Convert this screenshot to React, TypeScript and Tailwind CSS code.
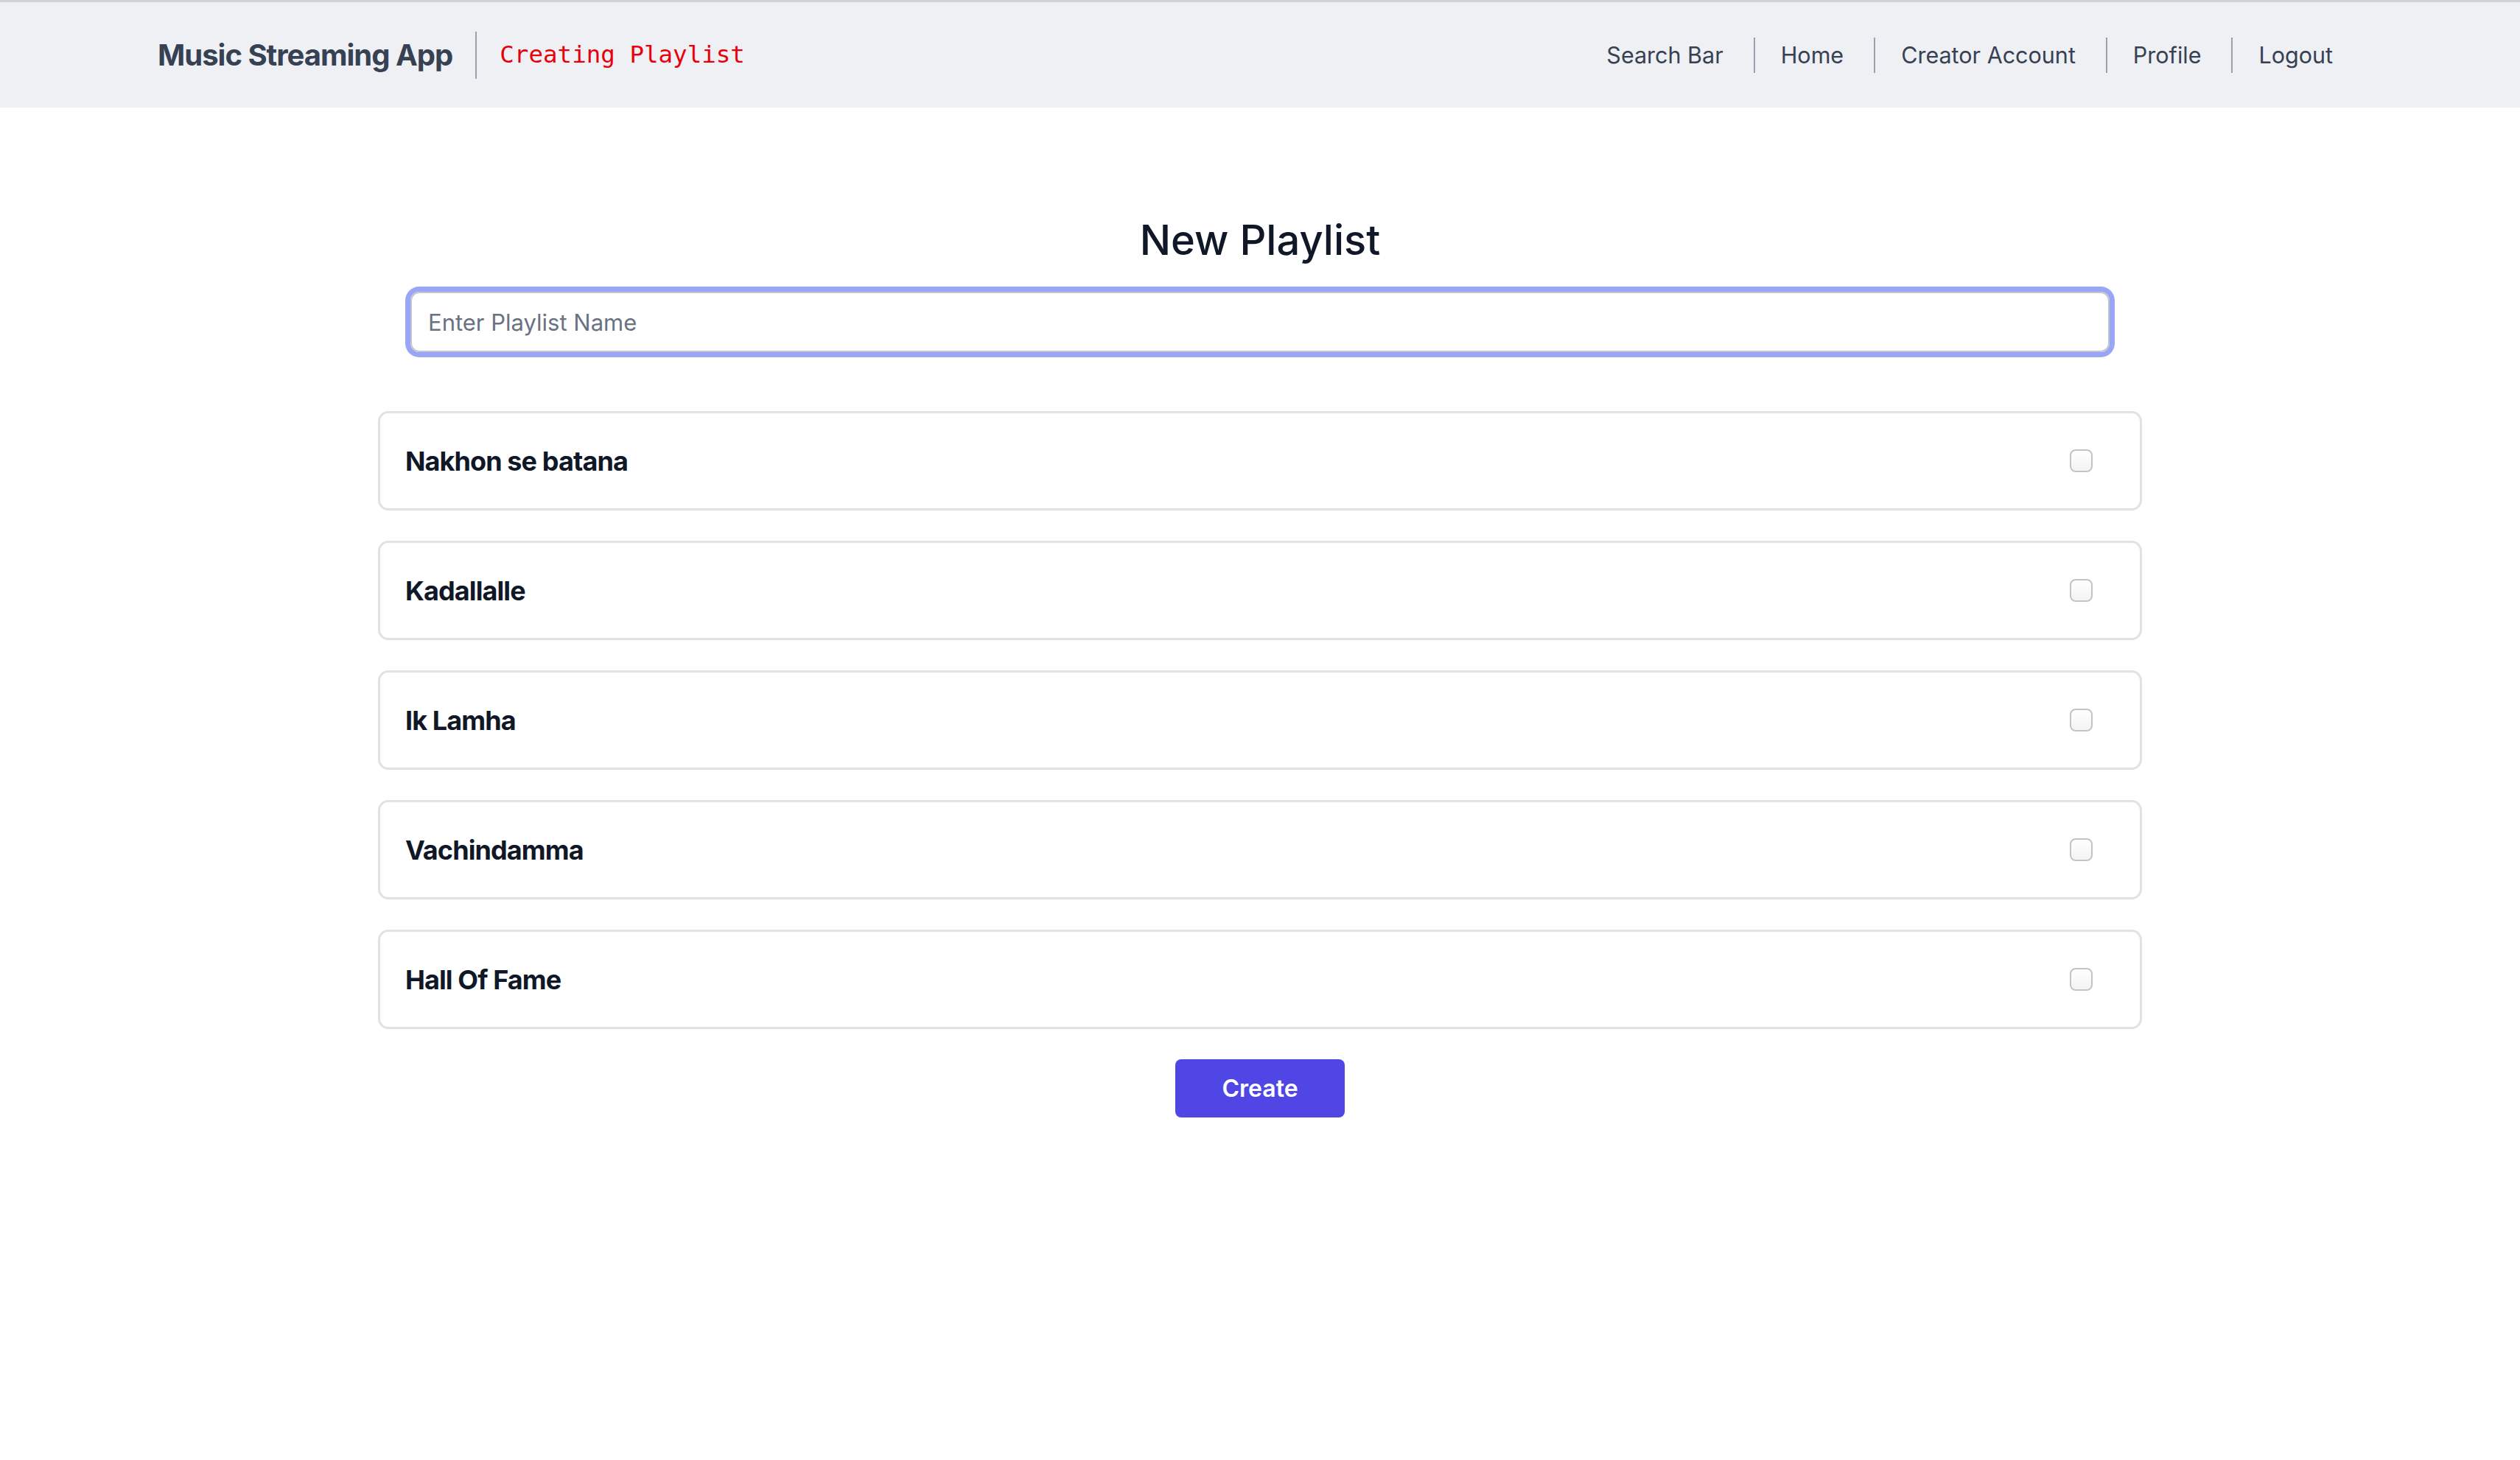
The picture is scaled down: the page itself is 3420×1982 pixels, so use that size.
import { useState } from "react";

const songs = [
  "Nakhon se batana",
  "Kadallalle",
  "Ik Lamha",
  "Vachindamma",
  "Hall Of Fame",
];

const navLinks = ["Search Bar", "Home", "Creator Account", "Profile", "Logout"];

export default function App() {
  const [name, setName] = useState("");
  const [selected, setSelected] = useState<Record<string, boolean>>({});

  return (
    <div className="min-h-screen bg-white font-['Inter','Noto_Sans',sans-serif]">
      {/* browser strip */}
      <div className="h-[3px] bg-[#d3d3d3]" />

      {/* Navbar */}
      <nav className="flex h-[143px] items-center justify-between bg-[#eff0f4] px-[214px]">
        <div className="flex items-center">
          <span className="text-[40px] font-bold tracking-tight text-gray-700">
            Music Streaming App
          </span>
          <span className="mx-[31px] h-[64px] w-[2px] bg-gray-400" />
          <span className="font-['DejaVu_Sans_Mono',monospace] text-[32.5px] text-red-600">
            Creating Playlist
          </span>
        </div>
        <div className="flex items-center">
          {navLinks.map((link, i) => (
            <a
              key={link}
              href="#"
              className={`text-[30.5px] leading-[48px] text-gray-700 ${
                i > 0 ? "border-l-2 border-gray-400 pl-[35px]" : ""
              } ${i < navLinks.length - 1 ? "pr-[41px]" : "pr-[40px]"}`}
            >
              {link}
            </a>
          ))}
        </div>
      </nav>

      {/* Main */}
      <main className="flex flex-col items-center pt-[146px]">
        <h1 className="text-[56px] font-medium leading-[68px] text-gray-900">
          New Playlist
        </h1>

        <div className="mt-[36px] flex w-[2394px] flex-col">
          <input
            value={name}
            onChange={(e) => setName(e.target.value)}
            placeholder="Enter Playlist Name"
            className="mx-[44px] h-[82px] rounded-[12px] border-2 border-[#c5c6c9] px-[22px] text-[31px] text-gray-900 outline-none ring-[7px] ring-[#99a6f8] placeholder:text-gray-500"
          />

          <div className="mt-[80px] flex flex-col gap-[41px]">
            {songs.map((song) => (
              <label
                key={song}
                className="flex h-[135px] items-center justify-between rounded-[14px] border-[3px] border-[#e1e2e7] pl-[34px] pr-[64px]"
              >
                <span className="text-[36px] font-bold tracking-tight text-gray-900">
                  {song}
                </span>
                <input
                  type="checkbox"
                  checked={!!selected[song]}
                  onChange={(e) =>
                    setSelected((s) => ({ ...s, [song]: e.target.checked }))
                  }
                  className="h-[31px] w-[31px] appearance-none rounded-[8px] border-2 border-[#c4c4c4] bg-gradient-to-b from-white to-[#f3f3f3] checked:bg-indigo-600"
                />
              </label>
            ))}
          </div>
        </div>

        <button className="mt-[41px] h-[79px] w-[230px] rounded-[8px] bg-[#4f46e5] text-[32px] font-semibold text-white">
          Create
        </button>
      </main>
    </div>
  );
}
